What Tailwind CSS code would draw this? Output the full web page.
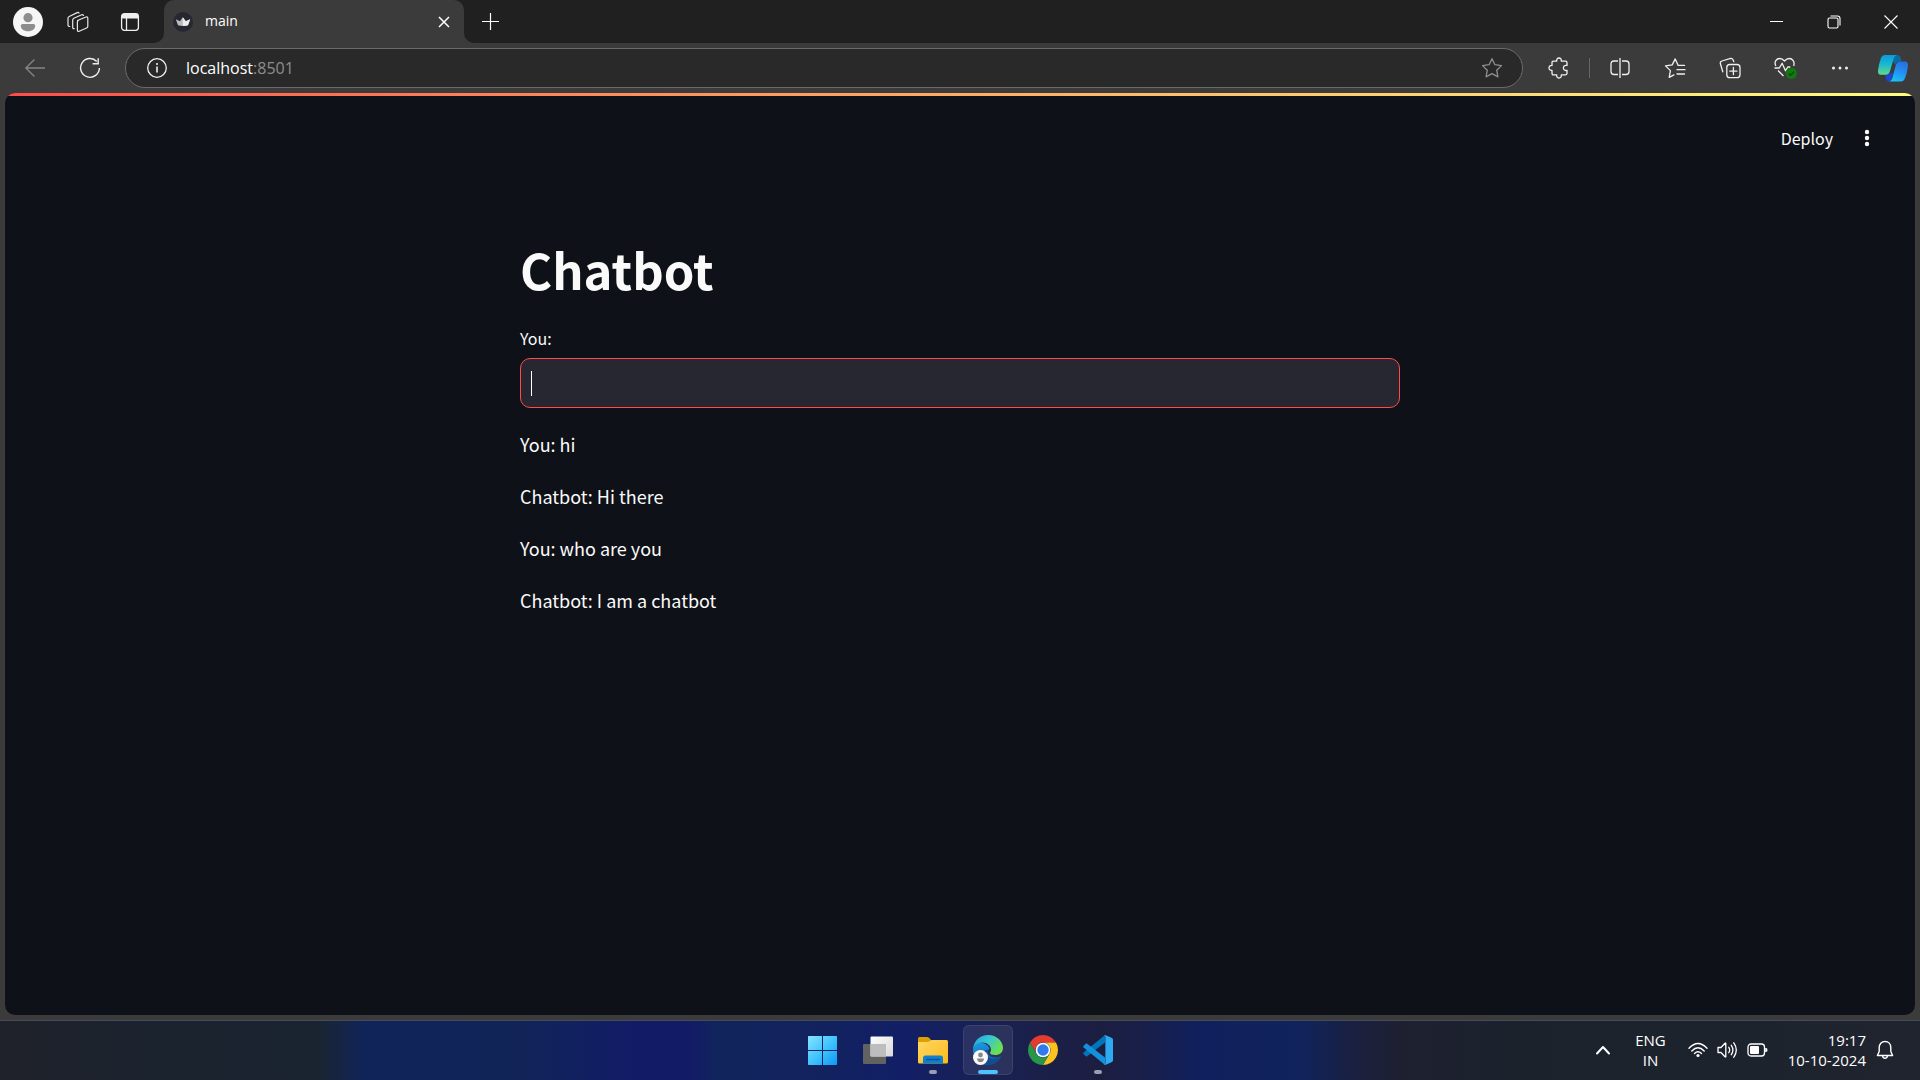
<!DOCTYPE html>
<html lang="en">
<head>
<meta charset="utf-8">
<meta name="viewport" content="width=device-width, initial-scale=1">
<title>main</title>
<script src="https://cdn.jsdelivr.net/npm/@tailwindcss/browser@4"></script>
</head>
<body class="flex h-screen flex-col overflow-hidden bg-[#3b3b3b] font-['Open_Sans','Noto_Sans',sans-serif] text-white">

<!-- Tab strip -->
<header class="flex h-[43px] shrink-0 items-stretch bg-[#202020]">
  <div class="flex items-center pl-[13px]">
    <button aria-label="Profile" class="size-[30px]">
      <svg viewBox="0 0 30 30" class="size-[30px]"><circle cx="15" cy="15" r="15" fill="#f6f6f6"/><circle cx="15" cy="10.7" r="4.6" fill="#8d8d8d"/><path d="M9.5 17h11a1.7 1.7 0 0 1 1.7 1.7c0 3.4-3.200 5.500-7.200 5.500s-7.200-2.100-7.200-5.500A1.700 1.700 0 0 1 9.500 17z" fill="#8d8d8d"/></svg>
    </button>
    <button aria-label="Workspaces" class="ml-6 size-[22px]">
      <svg viewBox="0 0 22 22" class="size-[22px]" fill="none" stroke="#e6e6e6" stroke-width="1.2" stroke-linejoin="round" stroke-linecap="round"><path d="M10.500 9.500 19 6q1.800-.500 1.800 1.200v8q0 1.300-1.200 1.800l-7.400 3.200q-1.800.600-1.800-1.200v-8q0-1 .900-1.500z"/><path d="M7.200 17.700q-1.500.200-1.500-1.400V9q0-1.200 1.100-1.700l7.900-3.600q1.300-.400 1.800.700"/><path d="M2.800 15.500q-1.800 0-1.800-1.500V7.200Q1 6 2.200 5.500l8-3.900q1.300-.500 1.800.500"/></svg>
    </button>
    <button aria-label="Tab actions" class="ml-[31px] size-5">
      <svg viewBox="0 0 20 20" class="size-5" fill="none" stroke="#efefef" stroke-width="1.300"><rect x="1.600" y="1.600" width="16.800" height="16.800" rx="2.800"/><path d="M2 4h16M2 5.500h16M2 3h16" stroke-width="1.800"/><path d="M6.500 6v12"/></svg>
    </button>
  </div>
  <div class="relative ml-6 flex w-[300px] items-center rounded-t-[10px] bg-[#3b3b3b] pl-[9px] pr-[14px]">
    <svg viewBox="0 0 10 10" class="absolute -left-[10px] bottom-0 size-[10px]"><path d="M10 0v10H0A10 10 0 0 0 10 0z" fill="#3b3b3b"/></svg>
    <svg viewBox="0 0 10 10" class="absolute -right-[10px] bottom-0 size-[10px]"><path d="M0 0v10h10A10 10 0 0 1 0 0z" fill="#3b3b3b"/></svg>
    <svg viewBox="0 0 20 20" class="size-5"><circle cx="10" cy="10" r="10" fill="#262730"/><path d="M2.800 7.300 7 9.300 9.800 5.200l3 4.100 4.400-2-2.200 5.900q-5 1.400-10 0z" fill="#bdbdbd"/><path d="m9.800 5.200 3 4.100 4.400-2-2.200 5.900q-2.300.700-5 .800z" fill="#ededed"/></svg>
    <span class="ml-3 -mt-0.5 flex-1 text-[14px] leading-5">main</span>
    <button aria-label="Close tab" class="size-3">
      <svg viewBox="0 0 12 12" class="size-3" stroke="#fff" stroke-width="1.500"><path d="m1 1 10 10M11 1 1 11"/></svg>
    </button>
  </div>
  <button aria-label="New tab" class="ml-[17px] -mt-px flex items-center">
    <svg viewBox="0 0 19 19" class="size-[19px]" stroke="#fff" stroke-width="1.200"><path d="M9.500 1v17M1 9.500h17"/></svg>
  </button>
  <div class="ml-auto flex pr-px">
    <button aria-label="Minimize" class="flex w-[57px] items-center justify-center"><svg viewBox="0 0 13 13" class="size-[13px]" stroke="#fff"><path d="M0 6.500h13"/></svg></button>
    <button aria-label="Restore" class="flex w-[57px] items-center justify-center"><svg viewBox="0 0 14 14" class="size-[14px]" fill="none" stroke="#fff" stroke-width="1.100"><rect x="1" y="3" width="10" height="10" rx="1.500"/><path d="M3.500 1h7q2.500 0 2.500 2.500v7"/></svg></button>
    <button aria-label="Close" class="flex w-[57px] items-center justify-center"><svg viewBox="0 0 14 14" class="size-[14px]" stroke="#fff" stroke-width="1.100"><path d="m.500.500 13 13m0-13-13 13"/></svg></button>
  </div>
</header>

<!-- Address toolbar -->
<nav class="flex h-[50px] shrink-0 items-center pr-[7px]">
  <button aria-label="Back" class="ml-6"><svg viewBox="0 0 22 20" class="h-5 w-[22px]" fill="none" stroke="#858585" stroke-width="1.300"><path d="M21 10H1.500M10.500 1.500 1.800 10l8.700 8.500"/></svg></button>
  <button aria-label="Refresh" class="ml-[33px]"><svg viewBox="0 0 22 22" class="size-[22px]" fill="none" stroke="#f0f0f0" stroke-width="1.400"><path d="M17.800 4.400A9.400 9.400 0 1 0 20.400 11"/><path d="M19.200 1.200v5.600h-5.600"/></svg></button>
  <div class="ml-6 flex h-10 flex-1 items-center rounded-full border border-[#6b6b6b] bg-[#292929] pl-[21px] pr-[19px]">
    <svg viewBox="0 0 20 20" class="size-5 shrink-0" fill="none" stroke="#f0f0f0" stroke-width="1.300"><circle cx="10" cy="10" r="9.300"/><path d="M10 8.500v6" stroke-width="1.600"/><circle cx="10" cy="6" r="1" fill="#f0f0f0" stroke="none"/></svg>
    <a href="http://localhost:8501" class="ml-[19px] flex-1 text-[16px] leading-6">localhost<span class="text-[#8d8d8d]">:8501</span></a>
    <button aria-label="Add to favorites"><svg viewBox="0 0 22 22" class="size-[22px]" fill="none" stroke="#8f8f8f" stroke-width="1.300" stroke-linejoin="round"><path d="m11 1.700 2.900 6 6.600.900-4.800 4.600 1.200 6.600L11 16.700l-5.900 3.100 1.200-6.600L1.500 8.600l6.600-.900z"/></svg></button>
  </div>
  <button aria-label="Extensions" class="ml-4 flex size-10 items-center justify-center"><svg viewBox="0 0 22 22" class="size-[22px]" fill="none" stroke="#f0f0f0" stroke-width="1.300" stroke-linejoin="round"><path d="M5.500 4.200h3.200c-.300-2 .700-3.200 2.300-3.200s2.600 1.200 2.300 3.200h4.200q1.500 0 1.500 1.500v2.800c-2-.600-3.600.500-3.600 2.400s1.600 3 3.600 2.400v3q0 1.500-1.500 1.500h-4.200c.300 2-.700 3.200-2.300 3.200s-2.600-1.200-2.300-3.200H5.500q-1.500 0-1.500-1.500v-3c-1.900.300-3-.800-3-2.400s1.100-2.700 3-2.400V5.700q0-1.500 1.500-1.500z"/></svg></button>
  <span class="mx-[10px] h-5 w-px bg-[#666]"></span>
  <div class="flex gap-[15px]">
    <button aria-label="Split screen" class="flex size-10 items-center justify-center"><svg viewBox="0 0 22 22" class="size-[22px]" fill="none" stroke="#f0f0f0" stroke-width="1.300"><path d="M9 4H5Q2 4 2 7v7.500q0 3 3 3h4M13 4h4q3 0 3 3v7.500q0 3-3 3h-4"/><path d="M11 1v20"/></svg></button>
    <button aria-label="Favorites" class="flex size-10 items-center justify-center"><svg viewBox="0 0 22 22" class="size-[22px]" fill="none" stroke="#f0f0f0" stroke-width="1.300" stroke-linejoin="round" stroke-linecap="round"><path d="M20.500 8.400h-6.300l-3-6.500-3 6-6.700 1 4.900 4.700-1.200 6.700 4.700-2.400M13 12.700h8M13 17h7.500"/></svg></button>
    <button aria-label="Collections" class="flex size-10 items-center justify-center"><svg viewBox="0 0 22 22" class="size-[22px]" fill="none" stroke="#f0f0f0" stroke-width="1.300" stroke-linecap="round"><rect x="7.800" y="7.500" width="13.200" height="13.200" rx="3"/><path d="M14.400 10.500v7.200M10.800 14.100H18M14.800 4.700 14 2.800q-.700-1.700-2.500-1.300L3 4Q.800 4.700 1.400 6.800l2.400 8"/></svg></button>
    <button aria-label="Browser essentials" class="flex size-10 items-center justify-center"><svg viewBox="0 0 24 24" class="size-6" fill="none" stroke="#f0f0f0" stroke-width="1.300" stroke-linejoin="round"><path d="M2.800 10C.800 5.500 3.500 2.500 6.800 2.500q2.500 0 4.700 2.500 2.200-2.500 4.700-2.500c3.300 0 5.800 2.900 4.500 7.500M1.500 12h4.800l2.800-4.700 3.400 7.400 2.300-3.700h2.500M5 14.500l5.500 5.500"/><circle cx="18.300" cy="17.300" r="5.600" fill="#0f7b0f" stroke="none"/><path d="m15.700 17.500 1.900 1.800 3.300-3.600" stroke="#173d17"/></svg></button>
    <button aria-label="Settings and more" class="flex size-10 items-center justify-center"><svg viewBox="0 0 18 4" class="h-1 w-[18px]" fill="#f0f0f0"><circle cx="2.500" cy="2" r="1.500"/><circle cx="9" cy="2" r="1.500"/><circle cx="15.500" cy="2" r="1.500"/></svg></button>
  </div>
  <button aria-label="Copilot" class="ml-[13px] flex size-10 items-center justify-center">
    <svg viewBox="0 0 32 28" class="h-7 w-8">
      <defs>
        <linearGradient id="cpA" x1="0" y1="0" x2="0" y2="1"><stop offset="0" stop-color="#0a9be0"/><stop offset=".45" stop-color="#16b8d0"/><stop offset="1" stop-color="#63d98a"/></linearGradient>
        <linearGradient id="cpB" x1=".7" y1="0" x2=".3" y2="1"><stop offset="0" stop-color="#2a6fdc"/><stop offset=".5" stop-color="#2490f5"/><stop offset="1" stop-color="#16c6f5"/></linearGradient>
      </defs>
      <path d="M23 7.500h5q3.500 0 3 4.500-1 7.300-3 12-1.200 3.500-4 3.500H12q2.500-.500 3.500-4l3.100-11.500q1.200-4.500 4.400-4.500z" fill="url(#cpB)"/>
      <path d="M14 1h6q3 0 3.700 3l1 3.500q-5.200-.500-6.700 4-.500-4-4-4z" fill="#0b6ba0"/>
      <path d="m8 20.500 8.500-2-2 6q-.800 3-3 3-2.500 0-3.500-7z" fill="#1d46d2"/>
      <path d="M8 1h12q-2.500.500-3.500 4l-3.300 11.500q-1.200 4.300-4.700 4.300H4q-3.500 0-3-4.500Q2 9 4 4q1.200-3 4-3z" fill="url(#cpA)"/>
    </svg>
  </button>
</nav>

<!-- Page viewport -->
<main class="mx-[5px] mb-[5px] flex min-h-0 flex-1 flex-col overflow-hidden rounded-[10px] bg-[#0e1117] font-['Noto_Sans_CJK_SC','Noto_Sans_CJK_JP',sans-serif] text-[#fafafa]">
  <div class="h-[3px] shrink-0 bg-linear-to-r from-[#ff4b4b] to-[#fffd80]"></div>
  <div class="flex h-[84px] shrink-0 items-center justify-end gap-6 pr-[38px]">
    <button class="text-[16px] leading-6">Deploy</button>
    <button aria-label="Main menu" class="flex w-5 justify-center"><svg viewBox="0 0 6 18" class="h-[18px] w-[6px]" fill="#fafafa"><circle cx="3" cy="3" r="2.200"/><circle cx="3" cy="9" r="2.200"/><circle cx="3" cy="15" r="2.200"/></svg></button>
  </div>
  <div class="mx-auto w-full max-w-[880px] pt-14">
    <h1 class="text-[49px] leading-[66px] font-bold">Chatbot</h1>
    <label for="prompt" class="mt-[22px] block text-[16px] leading-7">You:</label>
    <div class="relative mt-[6px]">
      <input id="prompt" type="text" class="block h-[50px] w-full rounded-[10px] border border-[#ff4b4b] bg-[#262730] px-[10px] text-[18px] caret-transparent outline-none">
      <span class="absolute left-[11px] top-[13px] h-[25px] w-px bg-white"></span>
    </div>
    <div class="mt-5 flex flex-col gap-5 text-[18px] leading-8">
      <p>You: hi</p>
      <p>Chatbot: Hi there</p>
      <p>You: who are you</p>
      <p>Chatbot: I am a chatbot</p>
    </div>
  </div>
</main>

<!-- Taskbar -->
<footer class="grid h-[60px] shrink-0 grid-cols-[1fr_auto_1fr] items-center border-t border-[#454b58] bg-[linear-gradient(90deg,#20222b_0%,#1b232e_8%,#1a2430_16.500%,#11245a_19%,#112458_27%,#121c66_33%,#121c66_36%,#11245a_37.500%,#12225f_43%,#121f66_47%,#1a2150_52%,#1c1e40_57.500%,#171f4c_60%,#10205e_62.500%,#10235a_68%,#1a2040_70.500%,#1e2030_73%,#1b222c_79%,#1f242e_100%)] pb-0.5">
  <div></div>
  <div class="flex gap-[5px]">
    <button aria-label="Start" class="flex size-[50px] items-center justify-center">
      <svg viewBox="0 0 30 30" class="size-[30px]"><defs><linearGradient id="win" x1="0" y1="0" x2="1" y2="1"><stop offset="0" stop-color="#86e4ff"/><stop offset=".5" stop-color="#42c4fc"/><stop offset="1" stop-color="#0c98f5"/></linearGradient></defs><path fill="url(#win)" d="M.500 1H14v14H0V1.500zM15 1H28.500l.5.500V15H15zM0 16h14V30H.500L0 29.500zM15 16H29v13.500l-.5.500H15z"/></svg>
    </button>
    <button aria-label="Task view" class="flex size-[50px] items-center justify-center">
      <svg viewBox="0 0 32 30" class="h-[30px] w-8"><defs><linearGradient id="tv" x1="0" y1="0" x2="1" y2="1"><stop offset="0" stop-color="#fff"/><stop offset="1" stop-color="#d8d8d8"/></linearGradient></defs><rect x="1" y="9" width="23" height="20" rx="1" fill="#626262"/><rect x="8.500" y="1.500" width="22.500" height="20" rx="1" fill="url(#tv)"/><path d="M8.500 9H24v12.500H9.500q-1 0-1-1z" fill="#bdbdbd"/></svg>
    </button>
    <button aria-label="File Explorer" class="relative flex size-[50px] items-center justify-center">
      <svg viewBox="0 0 30 28" class="h-7 w-[30px]"><defs><linearGradient id="fo" x1="0" y1="0" x2="1" y2="1"><stop offset="0" stop-color="#ffd968"/><stop offset="1" stop-color="#fbb916"/></linearGradient></defs><path d="M0 2.500Q0 1 1.500 1H9q1.200 0 2 .8L14 5v5H0z" fill="#dda000"/><path d="M0 6h9.500q1.200 0 2-.8l.7-.5Q13 4 14 4h14.500Q30 4 30 5.500V26q0 1.500-1.500 1.500h-27Q0 27.500 0 26z" fill="url(#fo)"/><path d="M5 27.500V22q0-2.500 2.500-2.500h15q2.500 0 2.500 2.500v5.500z" fill="#0f80cd"/><path d="M8.500 23.500h13" stroke="#0b5192" stroke-width="1.300" stroke-linecap="round"/></svg>
      <span class="absolute bottom-px h-1 w-2 rounded-full bg-[#9b9db5]"></span>
    </button>
    <button aria-label="Microsoft Edge" class="relative flex size-[50px] items-center justify-center rounded-md border border-white/8 bg-white/8">
      <svg viewBox="0 0 30 30" class="size-[30px]">
        <defs>
          <linearGradient id="ed1" x1="0" y1="0" x2="1" y2=".5"><stop offset="0" stop-color="#279ddc"/><stop offset=".5" stop-color="#34c7d5"/><stop offset="1" stop-color="#6ce04f"/></linearGradient>
          <linearGradient id="ed2" x1="0" y1="0" x2=".3" y2="1"><stop offset="0" stop-color="#1b9de2"/><stop offset="1" stop-color="#1160ae"/></linearGradient>
        </defs>
        <path d="M0 15C0 9 5 7 10 8c4 1 6 3.500 6.500 6-2 1-2.500 3-1.500 5 2.500 4 8 4.500 13 2-2 5.500-7 9-13 9C7 30 0 23.500 0 15z" fill="url(#ed2)"/>
        <path d="M15.200 14.500c-3 4 .300 10.500 7 9 2-.400 4-1.200 5.300-2C25 27 20.500 30 15 30c-5-2-7-6-6-10 .700-3 3-5 6.200-5.500z" fill="#124b92"/>
        <path d="M0 14C1 5.500 7 0 15 0c9 0 15 6.500 15 13 0 4.500-3.500 7-7.500 7-3.500 0-5.500-1-5.500-2 0-.800 1-1.500 1-3.500C18 11 14.500 7.500 9.500 7.500 4 7.500 1 10.500 0 14z" fill="url(#ed1)"/>
        <circle cx="7.500" cy="22.500" r="7.500" fill="#fafafa"/><circle cx="7.500" cy="20" r="2.400" fill="#888"/><path d="M4 23.500h7c0 2.500-1.500 3.600-3.500 3.600S4 26 4 23.500z" fill="#888"/>
      </svg>
      <span class="absolute bottom-0 h-1 w-5 rounded-full bg-[#4cc2ff]"></span>
    </button>
    <button aria-label="Google Chrome" class="flex size-[50px] items-center justify-center">
      <svg viewBox="0 0 30 30" class="size-[30px]"><path d="M2.010 7.500 8.500 18.750A7.500 7.500 0 0 1 15 7.500h12.990A15 15 0 0 0 2.010 7.500z" fill="#e33b2e"/><path d="M27.990 7.500A15 15 0 0 1 15 30l6.500-11.250A7.500 7.500 0 0 0 15 7.500z" fill="#fcc31f"/><path d="M15 30A15 15 0 0 1 2.010 7.500L8.500 18.750a7.500 7.500 0 0 0 13 0z" fill="#27964a"/><circle cx="15" cy="15" r="7.300" fill="#fff"/><circle cx="15" cy="15" r="5.700" fill="#2f7aed"/></svg>
    </button>
    <button aria-label="Visual Studio Code" class="relative flex size-[50px] items-center justify-center">
      <svg viewBox="0 0 30 30" class="size-[30px]"><path d="m.500 19 2.200 2.300q.700.600 1.500 0L22 7.500V.300q-.800.200-1.500.900L.600 17.500q-.800.700-.100 1.500z" fill="#0076ba"/><path d="M.500 11 2.700 8.700q.700-.600 1.500 0L22 22.500v7.200q-.800-.200-1.500-.900L.600 12.500q-.800-.700-.100-1.500z" fill="#1590dc"/><path d="M22 29.800q-1-.200-1.600-1c.800.800 2 .200 2-.900V2.100c0-1.100-1.200-1.700-2-.900q.600-.800 1.600-1 .700-.100 1.300.200l5.700 2.700q1 .500 1 1.600v20.600q0 1.100-1 1.600l-5.700 2.700q-.600.300-1.300.200z" fill="#2cabf3"/></svg>
      <span class="absolute bottom-px h-1 w-2 rounded-full bg-[#9b9db5]"></span>
    </button>
  </div>
  <div class="flex items-center justify-end pr-[26px] text-[15px] leading-5">
    <button aria-label="Show hidden icons"><svg viewBox="0 0 16 10" class="h-[10px] w-4" fill="none" stroke="#fff" stroke-width="2" stroke-linecap="round" stroke-linejoin="round"><path d="m2 8.500 6-6.500 6 6.500"/></svg></button>
    <button class="ml-6 text-center">ENG<br>IN</button>
    <button aria-label="Network, volume and battery" class="ml-[22px] flex items-center gap-[9px]">
      <svg viewBox="0 0 20 16" class="h-4 w-5" fill="none" stroke="#fff" stroke-width="1.400" stroke-linecap="round"><path d="M1 6.300q9-9.600 18 0M3.800 8.900q6.200-6.400 12.400 0M6.500 11.400q3.500-3.400 7 0"/><circle cx="10" cy="13.500" r="1.600" fill="#fff" stroke="none"/></svg>
      <svg viewBox="0 0 21 18" class="h-[18px] w-[21px]" fill="none" stroke="#fff" stroke-width="1.300" stroke-linecap="round" stroke-linejoin="round"><path d="M1 6.500h3l4-4.300q.800-.500.800.300v13q0 .800-.800.300l-4-4.300H1z"/><path d="M11.800 6.300q1.800 2.700 0 5.400M14.300 4.300q3.200 4.700 0 9.400M16.800 1.800q5 7.200 0 14.400"/></svg>
      <svg viewBox="0 0 21 14" class="h-[14px] w-[21px]"><rect x="1" y="1" width="16.500" height="12" rx="3" fill="none" stroke="#fff" stroke-width="1.300"/><rect x="3" y="3" width="9" height="8" rx="1" fill="#fff"/><path d="M18.200 5h.8q1.500 0 1.500 2t-1.500 2h-.8z" fill="#fff"/></svg>
    </button>
    <button class="ml-5 text-right">19:17<br>10-10-2024</button>
    <button aria-label="Notifications" class="ml-[10px]"><svg viewBox="0 0 18 20" class="h-5 w-[18px]" fill="none" stroke="#fff" stroke-width="1.400" stroke-linejoin="round"><path d="M9 1.500c3.500 0 5.800 2.500 5.800 6v4l1.800 4H1.400l1.800-4v-4c0-3.500 2.300-6 5.800-6zM6.500 15.800q.500 2.500 2.500 2.500t2.500-2.500"/></svg></button>
  </div>
</footer>
</body>
</html>
